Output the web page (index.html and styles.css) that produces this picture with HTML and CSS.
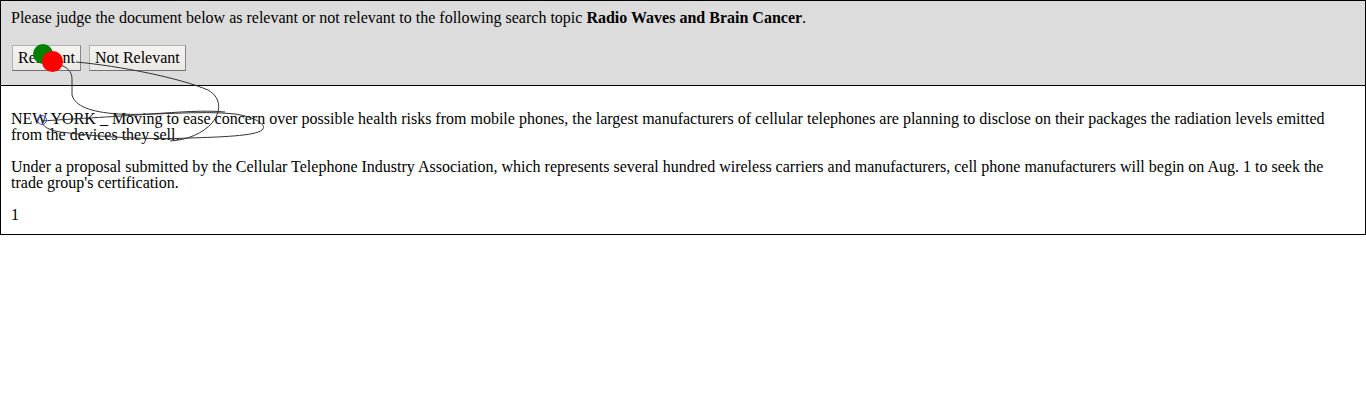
FILE: index.html
```html
<!DOCTYPE html>
<html>
<head>
<meta charset="utf-8">
<link rel="stylesheet" href="styles.css">
</head>
<body>
<div class="page">
  <div class="frame">
    <div class="header">
      <div class="prompt">Please judge the document below as relevant or not relevant to the following search topic <b>Radio Waves and Brain Cancer</b>.</div>
      <div class="actions">
        <button class="btn">Relevant</button>
        <button class="btn">Not Relevant</button>
      </div>
    </div>
    <div class="doc">
      <p>NEW YORK _ Moving to ease concern over possible health risks from mobile phones, the largest manufacturers of cellular telephones are planning to disclose on their packages the radiation levels emitted from the devices they sell.</p>
      <p>Under a proposal submitted by the Cellular Telephone Industry Association, which represents several hundred wireless carriers and manufacturers, cell phone manufacturers will begin on Aug. 1 to seek the trade group's certification.</p>
      <div class="pagenum">1</div>
    </div>
  </div>
  <svg class="trace" width="1366" height="400" viewBox="0 0 1366 400">
    <path d="M58 64 C67 67 72 71 72 79 L72 95 C75 106 90 112 118 114 C150 116 200 110 235 114 C255 117 268 125 262 130 C255 136 220 137 190 138 C150 140 100 137 60 132 C48 130 42 126 42 121" fill="none" stroke="#333" stroke-width="1"/>
    <path d="M42 121 C70 119 110 117 150 114 C180 112 205 110 225 112" fill="none" stroke="#333" stroke-width="1"/>
    <path d="M76 62 C120 66 180 78 208 90 C222 98 221 112 212 123 C203 133 188 140 170 141" fill="none" stroke="#333" stroke-width="1"/>
    <circle cx="43" cy="54" r="10" fill="#008000"/>
    <circle cx="52.5" cy="61.5" r="10.5" fill="#ff0000"/>
    <circle cx="42" cy="120" r="4.5" fill="none" stroke="#3a4fd6" stroke-width="1"/>
  </svg>
</div>
</body>
</html>
```
FILE: styles.css
```css
html, body {
  margin: 0;
  padding: 0;
  background: #ffffff;
}
body {
  font-family: "Liberation Serif", "Times New Roman", serif;
  font-size: 16px;
  line-height: 16px;
  color: #000;
}
.page {
  position: relative;
  width: 1366px;
  height: 400px;
}
.frame {
  border: 1px solid #000;
}
.header {
  background: #dcdcdc;
  border-bottom: 1px solid #000;
  padding: 9px 10px 14px 10px;
}
.actions {
  display: flex;
  gap: 8px;
  margin-top: 19px;
  padding-left: 1px;
}
.btn {
  font-family: "Liberation Serif", "Times New Roman", serif;
  font-size: 16px;
  line-height: 18px;
  color: #000;
  padding: 3px 5px;
  margin: 0;
  background: linear-gradient(#f5f3f0, #ebe9e6);
  border: 1px solid #b0b0b0;
  border-bottom-color: #707070;
  border-right-color: #858585;
  border-radius: 0;
}
.doc {
  padding: 25px 10px 11px 10px;
}
.doc p {
  margin: 0 0 16px 0;
}
.pagenum {
  margin: 0;
}
.trace {
  position: absolute;
  left: 0;
  top: 0;
  pointer-events: none;
}
```
